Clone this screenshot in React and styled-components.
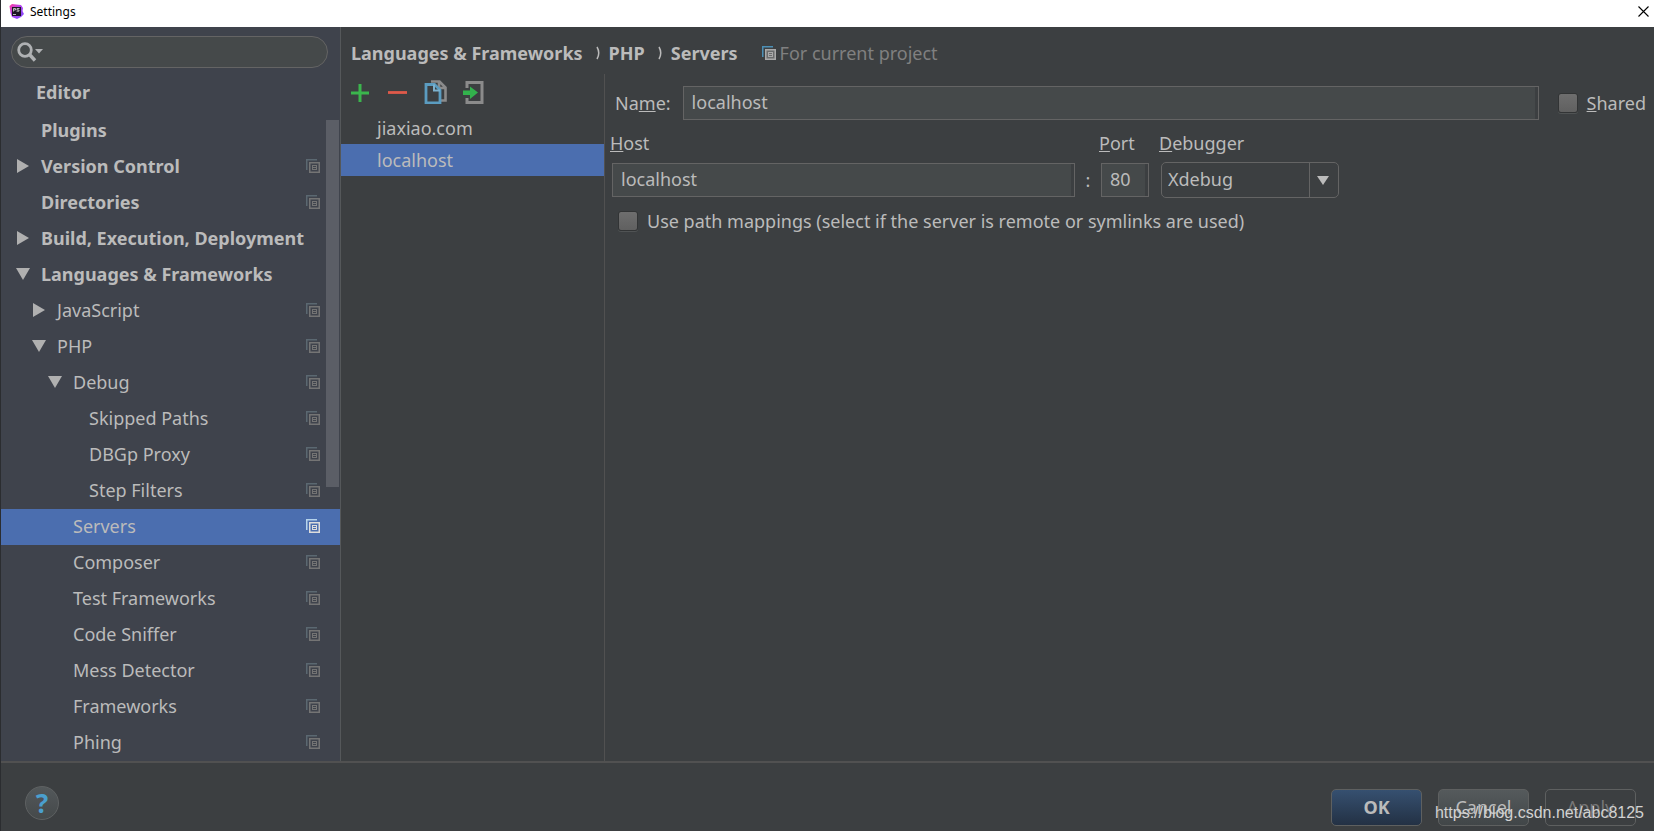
import { useState } from 'react';
import styled, { createGlobalStyle, css } from 'styled-components';

const GlobalStyle = createGlobalStyle`
  * {
    box-sizing: border-box;
  }

  body {
    margin: 0;
    background: #3c3f41;
    color: #bbb;
    font-family: 'Noto Sans', 'Open Sans', sans-serif;
    font-size: 18px;
    line-height: 24px;
  }

  button,
  input,
  select {
    font: inherit;
    color: inherit;
  }
`;

const Window = styled.div`
  display: flex;
  flex-direction: column;
  height: 100vh;
  border-left: 1px solid #2b2d30;
`;

const TitleBar = styled.header`
  display: flex;
  align-items: center;
  justify-content: space-between;
  flex: none;
  height: 27px;
  padding: 0 5px 4px 8px;
  background: #fff;
  color: #000;
`;

const WindowTitle = styled.h1`
  display: flex;
  align-items: center;
  gap: 6px;
  margin: 0;
  font-size: 12px;
  font-weight: 400;
  line-height: 16px;
`;

const CloseButton = styled.button`
  display: flex;
  padding: 0;
  border: none;
  background: none;
`;

const Body = styled.div`
  display: flex;
  flex: 1;
  min-height: 0;
`;

const Sidebar = styled.aside`
  position: relative;
  display: flex;
  flex-direction: column;
  flex: none;
  width: 340px;
  overflow: hidden;
  border-right: 1px solid #55585a;
  background: #3f434c;
`;

const SearchBox = styled.label`
  display: flex;
  align-items: center;
  flex: none;
  height: 32px;
  margin: 9px 12px 7px 10px;
  padding: 0 12px 0 5px;
  border: 1px solid #646464;
  border-radius: 16px;
  background: #45494a;
`;

const SearchInput = styled.input`
  flex: 1;
  min-width: 0;
  border: none;
  outline: none;
  background: none;
`;

const GroupHeading = styled.div`
  flex: none;
  height: 38px;
  padding-left: 35px;
  font-weight: 700;
  line-height: 34px;
`;

const Tree = styled.ul`
  margin: 0;
  padding: 0;
  list-style: none;
`;

const TreeRow = styled.li`
  display: flex;
  align-items: center;
  height: 36px;
  padding-right: 20px;
  padding-bottom: 2px;
  padding-left: ${({ $level }) => 15 + $level * 16}px;
  background: ${({ $selected }) => ($selected ? '#4b6eaf' : 'transparent')};
  font-weight: ${({ $level }) => ($level === 0 ? 700 : 400)};
  cursor: default;
`;

const TreeArrow = styled.span`
  display: flex;
  flex: none;
  width: 25px;
`;

const TreeLabel = styled.span`
  flex: 1;
  white-space: nowrap;
`;

const ScrollThumb = styled.div`
  position: absolute;
  top: 93px;
  right: 1px;
  width: 13px;
  height: 50%;
  background: #5b5e66;
`;

const Content = styled.main`
  display: flex;
  flex: 1;
  flex-direction: column;
  min-width: 0;
`;

const Breadcrumbs = styled.nav`
  display: flex;
  align-items: center;
  flex: none;
  height: 47px;
  padding: 5px 10px 0;
  font-weight: 700;
  white-space: nowrap;
`;

const Separator = styled.svg`
  margin: 0 8px 0 13px;
`;

const ProjectNote = styled.span`
  display: flex;
  align-items: center;
  gap: 4px;
  margin-left: 24px;
  color: #808080;
  font-weight: 400;
`;

const Panels = styled.div`
  display: flex;
  flex: 1;
  min-height: 0;
`;

const ServerPanel = styled.section`
  flex: none;
  width: 264px;
  border-right: 1px solid #515151;
`;

const Toolbar = styled.div`
  display: flex;
  align-items: center;
  gap: 14px;
  height: 38px;
  padding: 0 8px 2px;
`;

const ToolButton = styled.button`
  display: flex;
  padding: 0;
  border: none;
  background: none;
`;

const ServerList = styled.ul`
  margin: 0;
  padding: 0;
  list-style: none;
`;

const ServerRow = styled.li`
  height: 32px;
  padding-left: 36px;
  background: ${({ $selected }) => ($selected ? '#4b6eaf' : 'transparent')};
  line-height: 32px;
  cursor: default;
`;

const Form = styled.form`
  display: flex;
  flex: 1;
  flex-direction: column;
  min-width: 0;
  padding: 12px 8px 0 7px;
`;

const NameRow = styled.div`
  display: flex;
  align-items: center;
  padding-left: 3px;
`;

const fieldBox = css`
  min-width: 0;
  height: 34px;
  padding: 0 8px 2px;
  border: 1px solid #646464;
  border-radius: 0;
  outline: none;
  background: #45494a;
  box-shadow: inset -3px 0 #3c3f41;
`;

const NameInput = styled.input`
  ${fieldBox}
  flex: 1;
  margin: 0 19px 0 12px;
`;

const TextInput = styled.input`
  ${fieldBox}
  width: 100%;
`;

const CheckLabel = styled.label`
  display: flex;
  align-items: center;
  gap: 9px;
  white-space: nowrap;
`;

const CheckBox = styled.input`
  appearance: none;
  width: 20px;
  height: 20px;
  margin: 0;
  border: 1px solid #323435;
  border-radius: 3px;
  background: linear-gradient(#6e6e6e, #606060);
  box-shadow: 0 1px #505354;

  &:checked {
    background: #4b6eaf;
  }
`;

const PathRow = styled.div`
  padding: 11px 0 0 6px;
`;

const ServerGrid = styled.div`
  display: grid;
  grid-template-columns: minmax(0, 463px) 26px 48px 190px;
  align-items: center;
  row-gap: 7px;
  padding-top: 11px;
`;

const HostLabel = styled.label`
  margin-left: -2px;
`;

const DebuggerLabel = styled(HostLabel)`
  grid-column: 4;
  margin-left: 10px;
`;

const PortLabel = styled(HostLabel)`
  grid-column: 3;
`;

const Colon = styled.span`
  text-align: center;
`;

const SelectBox = styled.div`
  display: flex;
  position: relative;
  height: 36px;
  margin-left: 12px;
`;

const Select = styled.select`
  appearance: none;
  width: 100%;
  padding: 0 36px 2px 6px;
  border: 1px solid #646464;
  border-radius: 5px;
  outline: none;
  background: #3c3f41;
`;

const SelectArrow = styled.span`
  display: flex;
  align-items: center;
  justify-content: center;
  position: absolute;
  top: 1px;
  right: 1px;
  bottom: 1px;
  width: 29px;
  padding-right: 2px;
  border-left: 1px solid #646464;
  pointer-events: none;
`;

const Footer = styled.footer`
  display: flex;
  position: relative;
  align-items: center;
  gap: 16px;
  flex: none;
  height: 70px;
  padding: 21px 18px 0 24px;
  border-top: 2px solid #515151;
`;

const HelpButton = styled.button`
  width: 34px;
  height: 34px;
  margin: 0 auto 10px 0;
  padding: 0;
  border: 1px solid #5e6162;
  border-radius: 50%;
  background: linear-gradient(#53585a, #45494a);
  color: #4a9fce;
  font-size: 26px;
  font-weight: 700;
  line-height: 30px;
`;

const DialogButton = styled.button`
  width: 91px;
  height: 37px;
  padding: 0 0 2px;
  border: 1px solid #5e6060;
  border-radius: 5px;
  background: linear-gradient(#555a5c, #414648);

  ${({ $primary }) =>
    $primary &&
    css`
      background: linear-gradient(#365070, #233144);
      font-weight: 700;
    `}

  &:disabled {
    background: none;
    color: #777;
  }
`;

const Watermark = styled.span`
  position: absolute;
  right: 10px;
  bottom: 8px;
  color: #d2d2d2;
  font-family: 'Liberation Sans', Arial, sans-serif;
  font-size: 16px;
  line-height: 20px;
  pointer-events: none;
`;

const settings = [
  { label: 'Plugins', level: 0 },
  { label: 'Version Control', level: 0, arrow: 'right', project: true },
  { label: 'Directories', level: 0, project: true },
  { label: 'Build, Execution, Deployment', level: 0, arrow: 'right' },
  { label: 'Languages & Frameworks', level: 0, arrow: 'down' },
  { label: 'JavaScript', level: 1, arrow: 'right', project: true },
  { label: 'PHP', level: 1, arrow: 'down', project: true },
  { label: 'Debug', level: 2, arrow: 'down', project: true },
  { label: 'Skipped Paths', level: 3, project: true },
  { label: 'DBGp Proxy', level: 3, project: true },
  { label: 'Step Filters', level: 3, project: true },
  { label: 'Servers', level: 2, project: true },
  { label: 'Composer', level: 2, project: true },
  { label: 'Test Frameworks', level: 2, project: true },
  { label: 'Code Sniffer', level: 2, project: true },
  { label: 'Mess Detector', level: 2, project: true },
  { label: 'Frameworks', level: 2, project: true },
  { label: 'Phing', level: 2, project: true },
];

const servers = ['jiaxiao.com', 'localhost'];

const AppLogo = () => (
  <svg width="15" height="15" viewBox="0 0 15 15">
    <defs>
      <linearGradient id="logo" x1="0" y1="0" x2="1" y2="1">
        <stop offset="0" stopColor="#ff3c9e" />
        <stop offset="0.45" stopColor="#b345f1" />
        <stop offset="1" stopColor="#7b4bff" />
      </linearGradient>
    </defs>
    <path d="M0.500 2L3 0L7 0.500L12 1L14 4L13.500 7L15 10L12 13L8 15L3 13L1.500 9Z" fill="url(#logo)" />
    <rect x="3" y="3" width="9" height="9" fill="#1c1424" />
    <path d="M4.500 7.500V4.500H6.500V6H4.500M10.500 4.500H8V6H10V7.200H7.500" fill="none" stroke="#c8c8c8" strokeWidth="0.900" />
    <path d="M4 10.500H7" stroke="#ddd" strokeWidth="0.800" />
  </svg>
);

const SearchIcon = () => (
  <svg width="27" height="20" viewBox="0 0 27 20">
    <circle cx="8" cy="8" r="6.300" fill="none" stroke="#afb1b3" strokeWidth="2.800" />
    <path d="M12.500 12.500L18 18.500" stroke="#afb1b3" strokeWidth="3.400" />
    <path d="M18 7H26L22 11.500Z" fill="#afb1b3" />
  </svg>
);

const Arrow = ({ direction }) => (
  <svg width="14" height="14" viewBox="0 0 14 14">
    <path d={direction === 'down' ? 'M0 1H14L7 13Z' : 'M1 0V14L13 7Z'} fill="#b0b0b0" />
  </svg>
);

const ProjectIcon = ({ back = '#5b6871', front = '#747474', fill = 'none' }) => (
  <svg width="14" height="14" viewBox="0 0 14 14">
    <path d="M0 0H11V1.500H1.500V11H0Z" fill={back} />
    <rect x="3" y="3" width="11" height="11" fill={fill} />
    <path d="M3 3H14V14H3ZM4.500 4.500V12.500H12.500V4.500Z" fill={front} fillRule="evenodd" />
    <path d="M6 6H11V11H6ZM7 7V8H10V7ZM7 9V10H10V9Z" fill={front} fillRule="evenodd" />
  </svg>
);

const AddIcon = () => (
  <svg width="22" height="24" viewBox="0 0 22 24">
    <path d="M2 13H20M11 4V22" stroke="#3bb54d" strokeWidth="3" />
  </svg>
);

const RemoveIcon = () => (
  <svg width="25" height="24" viewBox="0 0 25 24">
    <path d="M3 12.500H22" stroke="#df5a4a" strokeWidth="2.800" />
  </svg>
);

const CopyIcon = () => (
  <svg width="24" height="24" viewBox="0 0 24 24">
    <path d="M7 1.500H15.500L21.500 7.500V20.500H17M15 2V8H21" fill="none" stroke="#8b8b8b" strokeWidth="2.600" />
    <path d="M2 4.500H10.500L16 10V23H2Z" fill="#3c3f41" stroke="#5b9cc0" strokeWidth="2.800" />
    <path d="M10 4.500V10.500H16" fill="none" stroke="#7db1cd" strokeWidth="2" />
  </svg>
);

const ImportIcon = () => (
  <svg width="24" height="24" viewBox="0 0 24 24">
    <path d="M5 8V2.500H20V22.500H5V18" fill="none" stroke="#8b8b8b" strokeWidth="3" />
    <path d="M1 10.500H8V6.500L16 12.500L8 19V15H1Z" fill="#32b24c" />
  </svg>
);

const Chevron = () => (
  <Separator width="5" height="14" viewBox="0 0 5 14">
    <path d="M1 1Q4.500 7 1 13" fill="none" stroke="#bbb" strokeWidth="1.500" />
  </Separator>
);

const App = () => {
  const [page, setPage] = useState('Servers');
  const [server, setServer] = useState('localhost');

  return (
    <>
      <GlobalStyle />
      <Window>
        <TitleBar>
          <WindowTitle>
            <AppLogo />
            Settings
          </WindowTitle>
          <CloseButton aria-label="Close">
            <svg width="11" height="11" viewBox="0 0 11 11">
              <path d="M0.500 0.500L10.500 10.500M10.500 0.500L0.500 10.500" stroke="#000" strokeWidth="1.100" />
            </svg>
          </CloseButton>
        </TitleBar>
        <Body>
          <Sidebar>
            <SearchBox>
              <SearchIcon />
              <SearchInput type="text" aria-label="Search settings" />
            </SearchBox>
            <GroupHeading>Editor</GroupHeading>
            <Tree>
              {settings.map(({ label, level, arrow, project }) => (
                <TreeRow key={label} $level={level} $selected={label === page} onClick={() => setPage(label)}>
                  <TreeArrow>{arrow && <Arrow direction={arrow} />}</TreeArrow>
                  <TreeLabel>{label}</TreeLabel>
                  {project && (label === page ? <ProjectIcon back="#b5d3ec" front="#dcdcdc" /> : <ProjectIcon />)}
                </TreeRow>
              ))}
            </Tree>
            <ScrollThumb />
          </Sidebar>
          <Content>
            <Breadcrumbs>
              Languages &amp; Frameworks
              <Chevron />
              PHP
              <Chevron />
              Servers
              <ProjectNote>
                <ProjectIcon back="#4c8fb5" front="#a9a9a9" fill="#6a6c6d" />
                For current project
              </ProjectNote>
            </Breadcrumbs>
            <Panels>
              <ServerPanel>
                <Toolbar>
                  <ToolButton aria-label="Add">
                    <AddIcon />
                  </ToolButton>
                  <ToolButton aria-label="Remove">
                    <RemoveIcon />
                  </ToolButton>
                  <ToolButton aria-label="Copy">
                    <CopyIcon />
                  </ToolButton>
                  <ToolButton aria-label="Import">
                    <ImportIcon />
                  </ToolButton>
                </Toolbar>
                <ServerList>
                  {servers.map((name) => (
                    <ServerRow key={name} $selected={name === server} onClick={() => setServer(name)}>
                      {name}
                    </ServerRow>
                  ))}
                </ServerList>
              </ServerPanel>
              <Form onSubmit={(e) => e.preventDefault()}>
                <NameRow>
                  <label htmlFor="name">
                    Na<u>m</u>e:
                  </label>
                  <NameInput id="name" type="text" defaultValue="localhost" />
                  <CheckLabel>
                    <CheckBox type="checkbox" />
                    <span>
                      <u>S</u>hared
                    </span>
                  </CheckLabel>
                </NameRow>
                <ServerGrid>
                  <HostLabel htmlFor="host">
                    <u>H</u>ost
                  </HostLabel>
                  <PortLabel htmlFor="port">
                    <u>P</u>ort
                  </PortLabel>
                  <DebuggerLabel htmlFor="debugger">
                    <u>D</u>ebugger
                  </DebuggerLabel>
                  <TextInput id="host" type="text" defaultValue="localhost" />
                  <Colon>:</Colon>
                  <TextInput id="port" type="text" defaultValue="80" />
                  <SelectBox>
                    <Select id="debugger" defaultValue="Xdebug">
                      <option>Xdebug</option>
                      <option>Zend Debugger</option>
                    </Select>
                    <SelectArrow>
                      <svg width="12" height="9" viewBox="0 0 12 9">
                        <path d="M0 0H12L6 9Z" fill="#bbb" />
                      </svg>
                    </SelectArrow>
                  </SelectBox>
                </ServerGrid>
                <PathRow>
                  <CheckLabel>
                    <CheckBox type="checkbox" />
                    <span>Use path mappings (select if the server is remote or symlinks are used)</span>
                  </CheckLabel>
                </PathRow>
              </Form>
            </Panels>
          </Content>
        </Body>
        <Footer>
          <HelpButton aria-label="Help">?</HelpButton>
          <DialogButton $primary>OK</DialogButton>
          <DialogButton>Cancel</DialogButton>
          <DialogButton disabled>Apply</DialogButton>
          <Watermark>https://blog.csdn.net/abc8125</Watermark>
        </Footer>
      </Window>
    </>
  );
};

export default App;
